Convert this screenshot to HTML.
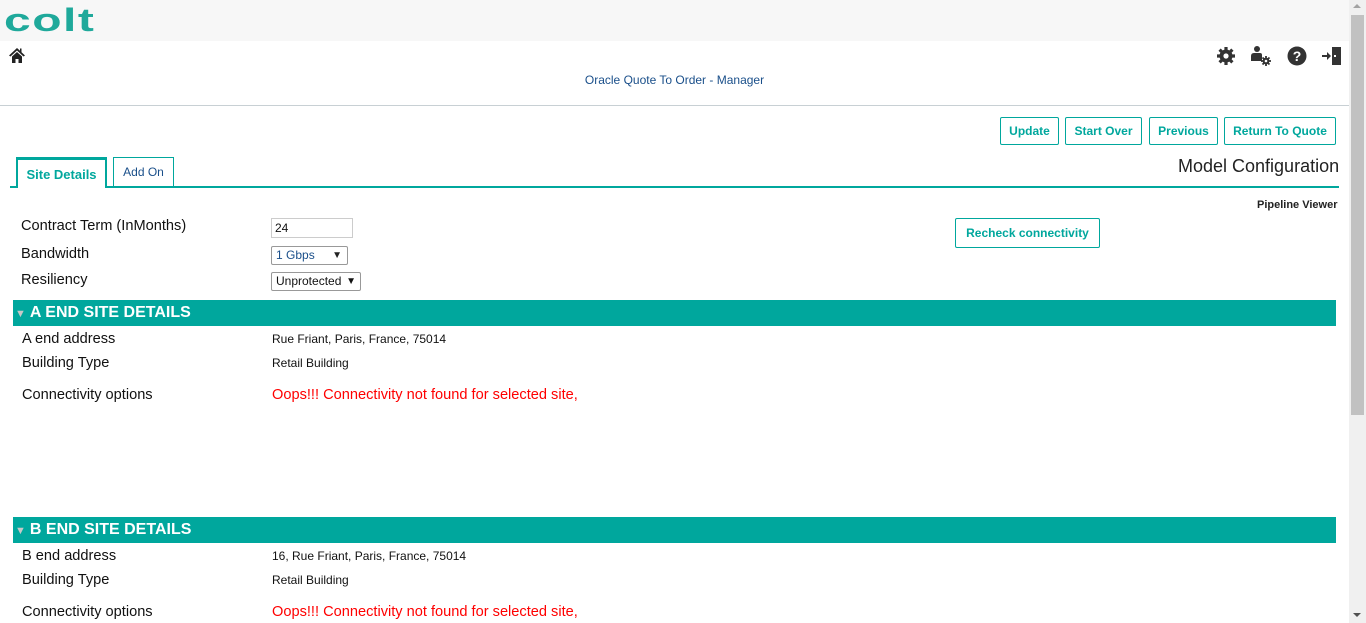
<!DOCTYPE html>
<html><head><style>
*{margin:0;padding:0;box-sizing:border-box}
body{width:1366px;height:623px;overflow:hidden;background:#fff;font-family:"Liberation Sans",Arial,sans-serif;position:relative;color:#111}
.a{position:absolute}
.hdr{left:0;top:0;width:1349px;height:41px;background:#f7f7f7}
.logo{left:4px;top:1px;font-size:32px;font-weight:bold;color:#1fa99b;letter-spacing:1px;line-height:38px;transform:scaleX(1.5);transform-origin:left}
.btn{border:1px solid #00a79d;border-radius:2px;color:#00a79d;font-weight:bold;font-size:12px;height:28px;line-height:26px;text-align:center;background:#fff}
.lbl{font-size:14.6px;color:#111}
.sm{font-size:12px;color:#111}
.bar{left:13px;width:1323px;height:26px;background:#00a79d;color:#fff;font-weight:bold;font-size:16px;line-height:26px}
.bar span{font-size:11px;margin:0 4px 0 2px;color:#c8c8c8}
.red{font-size:14.6px;color:#f00}
.sel{border:1px solid #999;border-radius:2px;font-size:12px;height:19px;line-height:17px;padding-left:4px;background:#fff}
</style></head><body>
<div class="a hdr"></div>
<div class="a logo">colt</div>
<svg class="a" style="left:8px;top:47px" width="18" height="17" viewBox="0 0 18 17"><path d="M9 1 L1 8.5 L2.5 9.5 L9 3.5 L15.5 9.5 L17 8.5 L13.5 5.2 V1.5 H12 V3.8 Z" fill="#222"/><path d="M4 9.5 L9 5 L14 9.5 V16 H10.5 V12 H7.5 V16 H4 Z" fill="#222"/></svg>
<svg class="a" style="left:1216px;top:46px" width="20" height="20" viewBox="0 0 20 20"><circle cx="10" cy="10" r="6.5" fill="#333"/><g stroke="#333" stroke-width="3.2"><line x1="10" y1="1" x2="10" y2="19"/><line x1="1" y1="10" x2="19" y2="10"/><line x1="3.6" y1="3.6" x2="16.4" y2="16.4"/><line x1="16.4" y1="3.6" x2="3.6" y2="16.4"/></g><circle cx="10" cy="10" r="2.6" fill="#fff"/></svg>
<svg class="a" style="left:1250px;top:45px" width="22" height="22" viewBox="0 0 22 22"><circle cx="7" cy="4" r="3" fill="#333"/><path d="M1 16 V11 Q1 8 4 8 H10 Q12 8 12 10 V16 Z" fill="#333"/><circle cx="16" cy="16" r="3.3" fill="#333"/><g stroke="#333" stroke-width="1.8"><line x1="16" y1="11" x2="16" y2="21"/><line x1="11" y1="16" x2="21" y2="16"/><line x1="12.5" y1="12.5" x2="19.5" y2="19.5"/><line x1="19.5" y1="12.5" x2="12.5" y2="19.5"/></g><circle cx="16" cy="16" r="1.3" fill="#fff"/></svg>
<svg class="a" style="left:1287px;top:46px" width="20" height="20" viewBox="0 0 20 20"><circle cx="10" cy="10" r="9.5" fill="#333"/><text x="10" y="15" font-size="14" font-weight="bold" fill="#fff" text-anchor="middle" font-family="Liberation Sans">?</text></svg>
<svg class="a" style="left:1321px;top:45px" width="22" height="22" viewBox="0 0 22 22"><path d="M11 2 H20 V20 H11 Z" fill="#333"/><rect x="13" y="10" width="2" height="2" fill="#fff"/><path d="M1 10 H6 V7 L10 11 L6 15 V12 H1 Z" fill="#333"/></svg>
<div class="a" style="left:0;top:74px;width:1349px;text-align:center;font-size:12px;color:#1a4f8a;line-height:1">Oracle Quote To Order - Manager</div>
<div class="a" style="left:0;top:105px;width:1349px;height:1px;background:#c8d0d4"></div>
<div class="a btn" style="left:1000px;top:117px;width:59px">Update</div>
<div class="a btn" style="left:1065px;top:117px;width:77px">Start Over</div>
<div class="a btn" style="left:1149px;top:117px;width:69px">Previous</div>
<div class="a btn" style="left:1224px;top:117px;width:112px">Return To Quote</div>
<div class="a" style="left:1178px;top:156px;font-size:18px;color:#222">Model Configuration</div>
<div class="a" style="left:10px;top:186px;width:1329px;height:2px;background:#00a79d"></div>
<div class="a" style="left:16px;top:157px;width:91px;height:31px;border:2px solid #00a79d;border-bottom:none;border-top-width:3px;background:#fff;color:#00a79d;font-weight:bold;font-size:13px;text-align:center;line-height:30px">Site Details</div>
<div class="a" style="left:113px;top:157px;width:61px;height:29px;border:1px solid #00a79d;border-bottom:none;background:#fff;color:#1a4f8a;font-size:12px;text-align:center;line-height:29px">Add On</div>
<div class="a" style="left:1257px;top:199px;font-size:11px;font-weight:bold;color:#222">Pipeline Viewer</div>
<div class="a btn" style="left:955px;top:218px;width:145px;height:30px;line-height:28px">Recheck connectivity</div>
<div class="a lbl" style="left:21px;top:218px">Contract Term (InMonths)</div>
<div class="a lbl" style="left:21px;top:246px">Bandwidth</div>
<div class="a lbl" style="left:21px;top:272px">Resiliency</div>
<div class="a" style="left:271px;top:218px;width:82px;height:20px;border:1px solid #ccc;font-size:12px;line-height:18px;padding-left:3px">24</div>
<div class="a sel" style="left:271px;top:246px;width:77px;color:#1a4f8a">1 Gbps<span style="position:absolute;right:5px;font-size:10px;color:#222">▼</span></div>
<div class="a sel" style="left:271px;top:272px;width:90px">Unprotected<span style="position:absolute;right:4px;font-size:10px">▼</span></div>
<div class="a bar" style="top:300px"><span>▼</span>A END SITE DETAILS</div>
<div class="a lbl" style="left:22px;top:331px">A end address</div>
<div class="a sm" style="left:272px;top:332px">Rue Friant, Paris, France, 75014</div>
<div class="a lbl" style="left:22px;top:355px">Building Type</div>
<div class="a sm" style="left:272px;top:356px">Retail Building</div>
<div class="a lbl" style="left:22px;top:387px">Connectivity options</div>
<div class="a red" style="left:272px;top:387px">Oops!!! Connectivity not found for selected site,</div>
<div class="a bar" style="top:517px"><span>▼</span>B END SITE DETAILS</div>
<div class="a lbl" style="left:22px;top:548px">B end address</div>
<div class="a sm" style="left:272px;top:549px">16, Rue Friant, Paris, France, 75014</div>
<div class="a lbl" style="left:22px;top:572px">Building Type</div>
<div class="a sm" style="left:272px;top:573px">Retail Building</div>
<div class="a lbl" style="left:22px;top:604px">Connectivity options</div>
<div class="a red" style="left:272px;top:604px">Oops!!! Connectivity not found for selected site,</div>
<div class="a" style="left:1349px;top:0;width:17px;height:623px;background:#f0f0f0"></div>
<div class="a" style="left:1351px;top:15px;width:13px;height:400px;background:#c1c1c1"></div>
<div class="a" style="left:1353px;top:4px;width:0;height:0;border-left:4px solid transparent;border-right:4px solid transparent;border-bottom:4px solid #a3a3a3"></div>
<div class="a" style="left:1353px;top:613px;width:0;height:0;border-left:4px solid transparent;border-right:4px solid transparent;border-top:4px solid #505050"></div>
</body></html>
